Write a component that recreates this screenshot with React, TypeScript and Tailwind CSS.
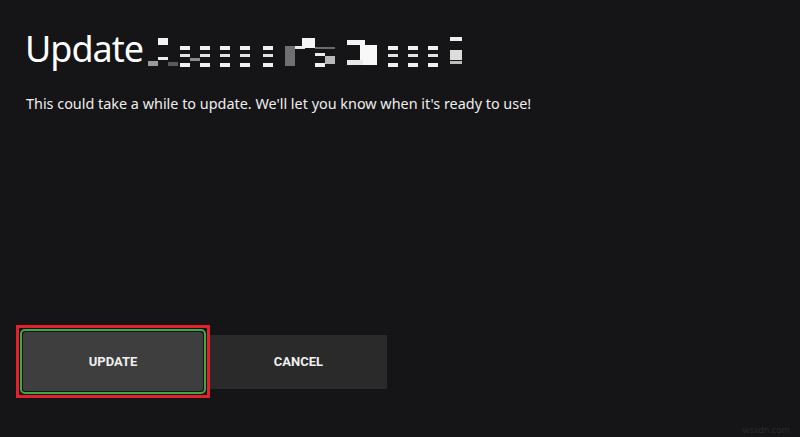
import React from "react";

type R = [number, number, number, number, string];

// pixelated, obscured game name — coordinates in page pixels
const blocks: R[] = [
  [158, 38, 10, 7, "#f2f2f2"],
  [148, 61, 10, 5, "#9a9a9a"],
  [158, 57, 10, 3, "#ececec"],
  [168, 62, 10, 4, "#5a5a5a"],
  [190, 58, 10, 3, "#8a8a8a"],
  [285, 46, 10, 20, "#707070"],
  [295, 46, 10, 3, "#e8e8e8"],
  [302, 38, 13, 10, "#f4f4f4"],
  [315, 47, 20, 2, "#6a6a6a"],
  [315, 53, 10, 3, "#ececec"],
  [325, 56, 10, 8, "#b8b8b8"],
  [315, 63, 10, 4, "#f0f0f0"],
  [347, 40, 18, 5, "#f4f4f4"],
  [360, 45, 17, 20, "#f8f8f8"],
  [347, 60, 16, 5, "#e8e8e8"],
  [450, 37, 12, 4, "#eeeeee"],
  [450, 50, 12, 10, "#dddddd"],
  [450, 61, 12, 3, "#bdbdbd"],
];
const cols = [180, 200, 220, 240, 263, 388, 408, 428];
cols.forEach((x) => {
  blocks.push([x, 46, 10, 4, "#f0f0f0"]);
  blocks.push([x, 54, 10, 3, "#e2e2e2"]);
  blocks.push([x, 63, 10, 4, "#f0f0f0"]);
});

const Mosaic = () => (
  <svg width="320" height="36" viewBox="146 34 320 36" className="block">
    {blocks.map(([x, y, w, h, c], i) => (
      <rect key={i} x={x} y={y} width={w} height={h} fill={c} />
    ))}
  </svg>
);

export default function App() {
  return (
    <div
      className="relative flex h-[437px] w-[800px] flex-col overflow-hidden bg-[#151416] text-white"
      style={{ fontFamily: '"Noto Sans", "Open Sans", sans-serif' }}
    >
      <div className="flex items-start pl-[25px] pt-[27px]">
        <h1 className="w-[121px] text-[36px] leading-[44px] font-normal tracking-[-1px]">Update</h1>
        <div className="mt-[7px]">
          <Mosaic />
        </div>
      </div>
      <p className="mt-[22px] pl-[26px] text-[14.4px] text-[#eeeeee]">
        This could take a while to update. We'll let you know when it's ready to use!
      </p>

      <div
        className="mt-auto mb-[39px] ml-[16px] flex items-center"
        style={{ fontFamily: "Roboto, sans-serif" }}
      >
        <div className="border-[3px] border-[#e3212b] p-[1px]">
          <div className="rounded-[5px] border-2 border-[#3fa943] p-[1px]">
            <button className="flex h-[59px] w-[180px] items-center justify-center rounded-[3px] bg-[#3e3e3e] text-[13px] font-bold text-[#f0f0f0]">
              UPDATE
            </button>
          </div>
        </div>
        <button className="flex h-[54px] w-[177px] items-center justify-center bg-[#2a2a2a] text-[13px] font-bold text-[#f0f0f0]">
          CANCEL
        </button>
      </div>

      <span className="absolute bottom-[1px] right-[10px] text-[9px] text-[#2a2a2a]">wsxdn.com</span>
    </div>
  );
}
